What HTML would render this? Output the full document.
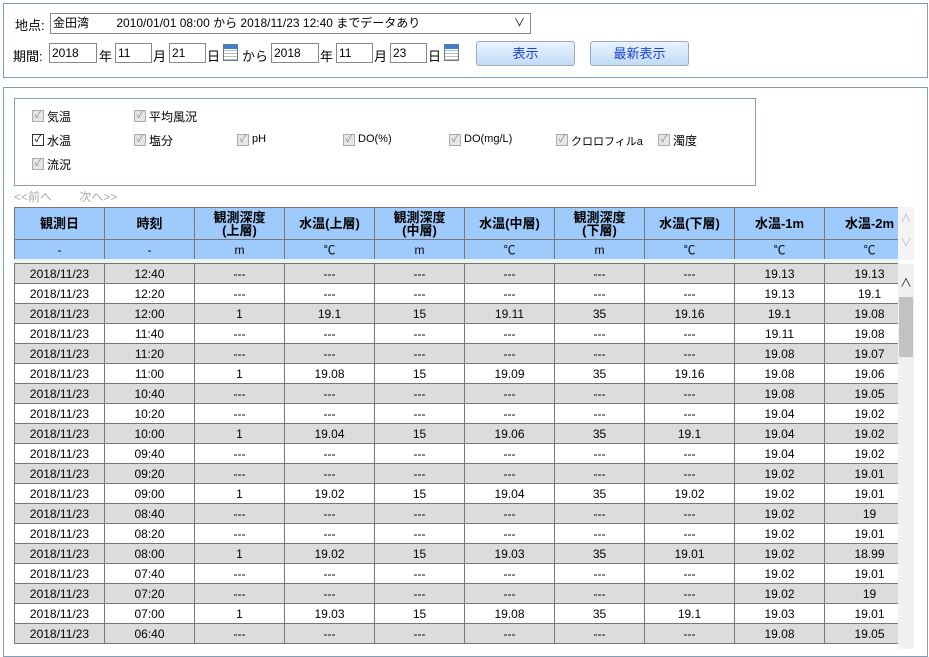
<!DOCTYPE html>
<html><head><meta charset="utf-8"><style>
*{margin:0;padding:0;box-sizing:border-box}
body{width:929px;height:645px;overflow:hidden;background:#fff;font-family:"Liberation Sans","Noto Sans CJK JP",sans-serif;font-size:12px;color:#000;position:relative}
.a{position:absolute}
.panel{border:1px solid #7f9db9}
.inp{position:absolute;border:1px solid #888;background:#fff;height:20px;font-size:12px;line-height:18px;padding-left:2px}
.btn{position:absolute;height:25px;border:1px solid #9ab;border-radius:3px;background:linear-gradient(#eaf3fd,#c2dcf7);color:#1c44d0;font-size:13px;text-align:center;line-height:23px;width:99px}
.cal{position:absolute;width:15px;height:17px;border:1px solid #678;background:repeating-linear-gradient(#fff 0 2px,#bbb 2px 3px);}
.cal:before{content:"";position:absolute;left:0;right:0;top:0;height:4px;background:#3a7fd0}
.cb{position:absolute;width:12px;height:12px;border:1px solid #aaa;background:#e6e6e6;font-size:10px;line-height:10px;text-align:center;color:#888}
.cb.on{border-color:#333;background:#fff;color:#000}
.lbl{position:absolute;font-size:12px}
table{border-collapse:collapse;table-layout:fixed;position:absolute;left:14px;width:900px}
td{border:1px solid #777;width:90px;text-align:center;height:20px;font-size:12px;padding:0;overflow:hidden;white-space:nowrap}
.h td{background:#9fcbfc;font-weight:bold;font-size:13px;line-height:13px;height:32px}
.u td{background:#9fcbfc;height:20px}
.g td{background:#dcdcdc}
</style></head><body>
<div class="a panel" style="left:3px;top:3px;width:925px;height:75px"></div>
<div class="lbl" style="left:15px;top:15px;font-size:13px">地点:</div>
<div class="inp" style="left:50px;top:13px;width:481px;height:21px;line-height:19px">金田湾　　 2010/01/01 08:00 から 2018/11/23 12:40 までデータあり<span style="position:absolute;right:5px;top:0;font-size:11px">&#x2228;</span></div>
<div class="lbl" style="left:13px;top:46px;font-size:13px">期間:</div>
<div class="inp" style="left:49px;top:43px;width:48px">2018</div><div class="lbl" style="left:99px;top:46px;font-size:13px">年</div>
<div class="inp" style="left:115px;top:43px;width:37px">11</div><div class="lbl" style="left:153px;top:46px;font-size:13px">月</div>
<div class="inp" style="left:169px;top:43px;width:37px">21</div><div class="lbl" style="left:207px;top:46px;font-size:13px">日</div>
<div class="cal" style="left:223px;top:44px"></div>
<div class="lbl" style="left:242px;top:46px;font-size:13px">から</div>
<div class="inp" style="left:271px;top:43px;width:48px">2018</div><div class="lbl" style="left:320px;top:46px;font-size:13px">年</div>
<div class="inp" style="left:336px;top:43px;width:37px">11</div><div class="lbl" style="left:374px;top:46px;font-size:13px">月</div>
<div class="inp" style="left:390px;top:43px;width:37px">23</div><div class="lbl" style="left:428px;top:46px;font-size:13px">日</div>
<div class="cal" style="left:444px;top:44px"></div>
<div class="btn" style="left:476px;top:41px">表示</div>
<div class="btn" style="left:590px;top:41px">最新表示</div>

<div class="a panel" style="left:3px;top:87px;width:925px;height:570px"></div>
<div class="a panel" style="left:14px;top:98px;width:742px;height:88px"></div>
<div class="cb" style="left:32px;top:110px">✓</div><div class="lbl" style="left:47px;top:108px">気温</div>
<div class="cb" style="left:134px;top:110px">✓</div><div class="lbl" style="left:149px;top:108px">平均風況</div>
<div class="cb on" style="left:32px;top:134px">✓</div><div class="lbl" style="left:47px;top:132px">水温</div>
<div class="cb" style="left:134px;top:134px">✓</div><div class="lbl" style="left:149px;top:132px">塩分</div>
<div class="cb" style="left:237px;top:134px">✓</div><div class="lbl" style="left:252px;top:133px;font-size:11px">pH</div>
<div class="cb" style="left:343px;top:134px">✓</div><div class="lbl" style="left:358px;top:133px;font-size:11px">DO(%)</div>
<div class="cb" style="left:449px;top:134px">✓</div><div class="lbl" style="left:464px;top:133px;font-size:11px">DO(mg/L)</div>
<div class="cb" style="left:556px;top:134px">✓</div><div class="lbl" style="left:571px;top:133px;font-size:11px">クロロフィルa</div>
<div class="cb" style="left:658px;top:134px">✓</div><div class="lbl" style="left:673px;top:132px">濁度</div>
<div class="cb" style="left:32px;top:158px">✓</div><div class="lbl" style="left:47px;top:156px">流況</div>
<div class="lbl" style="left:14px;top:188px;color:#aaa">&lt;&lt;前へ　　 次へ&gt;&gt;</div>

<div class="a" style="left:14px;top:207px;width:884px;height:53px;overflow:hidden">
<table style="left:0;top:0"><tr class="h"><td>観測日</td><td>時刻</td><td>観測深度<br>(上層)</td><td>水温(上層)</td><td>観測深度<br>(中層)</td><td>水温(中層)</td><td>観測深度<br>(下層)</td><td>水温(下層)</td><td>水温-1m</td><td>水温-2m</td></tr>
<tr class="u"><td>-</td><td>-</td><td>m</td><td>℃</td><td>m</td><td>℃</td><td>m</td><td>℃</td><td>℃</td><td>℃</td></tr></table></div>
<div class="a" style="left:898px;top:207px;width:16px;height:53px;background:#f4f4f4;color:#bbb;font-size:11px;text-align:center;line-height:24px">&#x2227;<br>&#x2228;</div>
<div class="a" style="left:14px;top:259px;width:884px;height:4px;background:#eef5ee"></div>

<div class="a" style="left:14px;top:263px;width:884px;height:390px;overflow:hidden">
<table style="left:0;top:0">
<tr class="g"><td>2018/11/23</td><td>12:40</td><td>---</td><td>---</td><td>---</td><td>---</td><td>---</td><td>---</td><td>19.13</td><td>19.13</td></tr>
<tr><td>2018/11/23</td><td>12:20</td><td>---</td><td>---</td><td>---</td><td>---</td><td>---</td><td>---</td><td>19.13</td><td>19.1</td></tr>
<tr class="g"><td>2018/11/23</td><td>12:00</td><td>1</td><td>19.1</td><td>15</td><td>19.11</td><td>35</td><td>19.16</td><td>19.1</td><td>19.08</td></tr>
<tr><td>2018/11/23</td><td>11:40</td><td>---</td><td>---</td><td>---</td><td>---</td><td>---</td><td>---</td><td>19.11</td><td>19.08</td></tr>
<tr class="g"><td>2018/11/23</td><td>11:20</td><td>---</td><td>---</td><td>---</td><td>---</td><td>---</td><td>---</td><td>19.08</td><td>19.07</td></tr>
<tr><td>2018/11/23</td><td>11:00</td><td>1</td><td>19.08</td><td>15</td><td>19.09</td><td>35</td><td>19.16</td><td>19.08</td><td>19.06</td></tr>
<tr class="g"><td>2018/11/23</td><td>10:40</td><td>---</td><td>---</td><td>---</td><td>---</td><td>---</td><td>---</td><td>19.08</td><td>19.05</td></tr>
<tr><td>2018/11/23</td><td>10:20</td><td>---</td><td>---</td><td>---</td><td>---</td><td>---</td><td>---</td><td>19.04</td><td>19.02</td></tr>
<tr class="g"><td>2018/11/23</td><td>10:00</td><td>1</td><td>19.04</td><td>15</td><td>19.06</td><td>35</td><td>19.1</td><td>19.04</td><td>19.02</td></tr>
<tr><td>2018/11/23</td><td>09:40</td><td>---</td><td>---</td><td>---</td><td>---</td><td>---</td><td>---</td><td>19.04</td><td>19.02</td></tr>
<tr class="g"><td>2018/11/23</td><td>09:20</td><td>---</td><td>---</td><td>---</td><td>---</td><td>---</td><td>---</td><td>19.02</td><td>19.01</td></tr>
<tr><td>2018/11/23</td><td>09:00</td><td>1</td><td>19.02</td><td>15</td><td>19.04</td><td>35</td><td>19.02</td><td>19.02</td><td>19.01</td></tr>
<tr class="g"><td>2018/11/23</td><td>08:40</td><td>---</td><td>---</td><td>---</td><td>---</td><td>---</td><td>---</td><td>19.02</td><td>19</td></tr>
<tr><td>2018/11/23</td><td>08:20</td><td>---</td><td>---</td><td>---</td><td>---</td><td>---</td><td>---</td><td>19.02</td><td>19.01</td></tr>
<tr class="g"><td>2018/11/23</td><td>08:00</td><td>1</td><td>19.02</td><td>15</td><td>19.03</td><td>35</td><td>19.01</td><td>19.02</td><td>18.99</td></tr>
<tr><td>2018/11/23</td><td>07:40</td><td>---</td><td>---</td><td>---</td><td>---</td><td>---</td><td>---</td><td>19.02</td><td>19.01</td></tr>
<tr class="g"><td>2018/11/23</td><td>07:20</td><td>---</td><td>---</td><td>---</td><td>---</td><td>---</td><td>---</td><td>19.02</td><td>19</td></tr>
<tr><td>2018/11/23</td><td>07:00</td><td>1</td><td>19.03</td><td>15</td><td>19.08</td><td>35</td><td>19.1</td><td>19.03</td><td>19.01</td></tr>
<tr class="g"><td>2018/11/23</td><td>06:40</td><td>---</td><td>---</td><td>---</td><td>---</td><td>---</td><td>---</td><td>19.08</td><td>19.05</td></tr>
</table></div>
<div class="a" style="left:898px;top:264px;width:16px;height:385px;background:#f0f0f0"></div>
<div class="a" style="left:898px;top:274px;width:16px;text-align:center;font-size:12px;color:#333">&#x2227;</div>
<div class="a" style="left:899px;top:297px;width:14px;height:60px;background:#c2c2c2"></div>
</body></html>
